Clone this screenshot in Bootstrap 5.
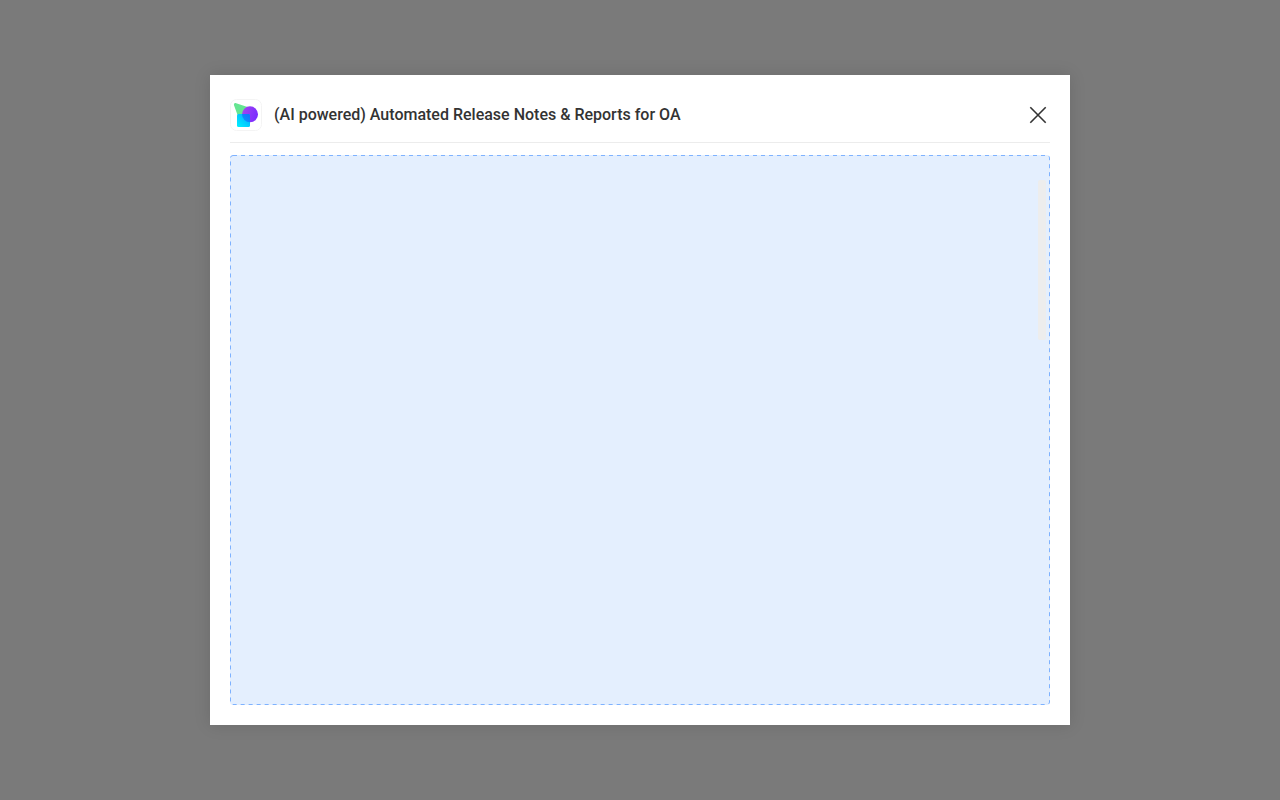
<!DOCTYPE html>
<html lang="en">
<head>
<meta charset="utf-8">
<meta name="viewport" content="width=device-width, initial-scale=1">
<title>Automated Release Notes &amp; Reports</title>
<link href="https://cdn.jsdelivr.net/npm/bootstrap@5.3.0/dist/css/bootstrap.min.css" rel="stylesheet">
<style>
  body { background: #7a7a7a; font-family: Roboto, sans-serif; color: #333; }
  .app-dialog { max-width: 860px; min-height: 650px; padding: 20px; box-shadow: 0 0 16px rgba(0, 0, 0, .12); }
  .app-header { padding: 4px 0 11px; border-bottom: 1px solid #ececec; margin-bottom: 12px; }
  .app-title { font-size: 16px; line-height: 24px; font-weight: 500; }
  .app-close { width: 24px; height: 24px; color: #333; }
  .app-frame { background: #e4effe; border-radius: 3px; }
  .frame-outline rect { x: .5px; y: .5px; width: calc(100% - 1px); height: calc(100% - 1px); }
  .frame-thumb { width: 8px; height: 160px; margin: 25px 4px 0 0; border-radius: 2px; background: #ededed; }
</style>
</head>
<body>
<main class="min-vh-100 d-flex align-items-center justify-content-center">
  <section class="app-dialog bg-white w-100 d-flex flex-column" role="dialog" aria-labelledby="dialog-title">
    <header class="app-header d-flex align-items-center">
      <svg class="flex-shrink-0" width="32" height="32" viewBox="0 0 32 32" aria-hidden="true">
        <defs>
          <linearGradient id="violet" x1="0" y1="0.2" x2="1" y2="0.5"><stop stop-color="#a344f0"/><stop offset="1" stop-color="#7a2cff"/></linearGradient>
          <linearGradient id="cyan" x1="1" y1="0" x2="0" y2="1"><stop stop-color="#04a4ff"/><stop offset="1" stop-color="#00f2ff"/></linearGradient>
          <linearGradient id="overlap" x1="1" y1="0" x2="0" y2="1"><stop stop-color="#1a55f8"/><stop offset="1" stop-color="#0a94ff"/></linearGradient>
          <clipPath id="square"><rect x="7" y="15" width="13" height="13" rx="1.5"/></clipPath>
        </defs>
        <rect x=".5" y=".5" width="31" height="31" rx="6" fill="#fff" stroke="#f4f4f4"/>
        <path d="M4 6.2C3.6 4.6 4.8 3.7 6.2 4.2L19 8.4L9 20Z" fill="#65e591"/>
        <circle cx="20" cy="15.3" r="8" fill="url(#violet)"/>
        <rect x="7" y="15" width="13" height="13" rx="1.5" fill="url(#cyan)"/>
        <circle cx="20" cy="15.3" r="8" fill="url(#overlap)" clip-path="url(#square)"/>
      </svg>
      <h1 class="app-title flex-grow-1 mb-0 ms-2 ps-1" id="dialog-title">(AI powered) Automated Release Notes &amp; Reports for OA</h1>
      <button class="app-close btn p-0 border-0 d-flex" type="button" aria-label="Close">
        <svg width="24" height="24" viewBox="0 0 24 24" fill="none" stroke="currentColor" stroke-width="1.6" aria-hidden="true"><path d="M4.3 4.3L19.7 19.7M19.7 4.3L4.3 19.7"/></svg>
      </button>
    </header>
    <div class="app-frame position-relative flex-grow-1 d-flex justify-content-end">
      <div class="frame-thumb"></div>
      <svg class="frame-outline position-absolute top-0 start-0 w-100 h-100" aria-hidden="true"><rect rx="2.5" fill="none" stroke="#7eb2ff" stroke-dasharray="4 4"/></svg>
    </div>
  </section>
</main>
<script src="https://cdn.jsdelivr.net/npm/bootstrap@5.3.0/dist/js/bootstrap.bundle.min.js"></script>
</body>
</html>
